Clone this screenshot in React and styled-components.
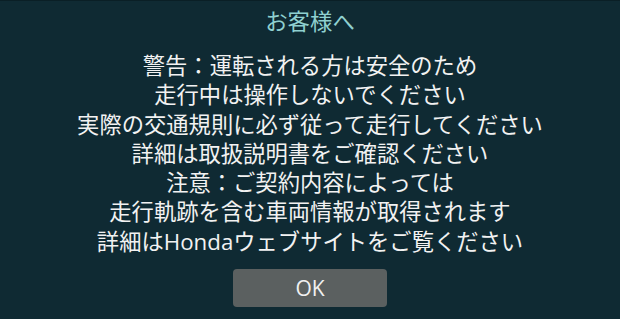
import React from 'react';
import styled, { createGlobalStyle } from 'styled-components';

const GlobalStyle = createGlobalStyle`
    html, body {
        margin: 0;
        padding: 0;
        background: #0f2a33;
    }
`

const Screen = styled.div`
    width: 620px;
    height: 319px;
    box-sizing: border-box;
    background: #0f2a33;
    border-top: 1px solid #0a1f26;
    display: flex;
    flex-direction: column;
    align-items: center;
    font-family: "Open Sans", "Noto Sans CJK JP", sans-serif;
    padding-top: 6px;
`

const Title = styled.div`
    color: #8fd0d0;
    font-size: 22.4px;
    line-height: 29px;
    margin-bottom: 15px;
`

const Message = styled.div`
    color: #f2f2f2;
    font-size: 22.3px;
    line-height: 29.3px;
    text-align: center;
`

const OkButton = styled.button`
    margin-top: 13px;
    width: 154px;
    height: 38px;
    border: none;
    border-radius: 4px;
    background: #5b6060;
    color: #f0f0f0;
    font-family: "Open Sans", "Noto Sans CJK JP", sans-serif;
    font-size: 21px;
    padding: 0;
    cursor: pointer;
`

const lines = [
    '警告：運転される方は安全のため',
    '走行中は操作しないでください',
    '実際の交通規則に必ず従って走行してください',
    '詳細は取扱説明書をご確認ください',
    '注意：ご契約内容によっては',
    '走行軌跡を含む車両情報が取得されます',
    '詳細はHondaウェブサイトをご覧ください',
]

function App() {
    return (
        <Screen>
            <GlobalStyle />
            <Title>お客様へ</Title>
            <Message>
                {lines.map((line, index) => <div key={index}>{line}</div>)}
            </Message>
            <OkButton>OK</OkButton>
        </Screen>
    )
}

export default App;
